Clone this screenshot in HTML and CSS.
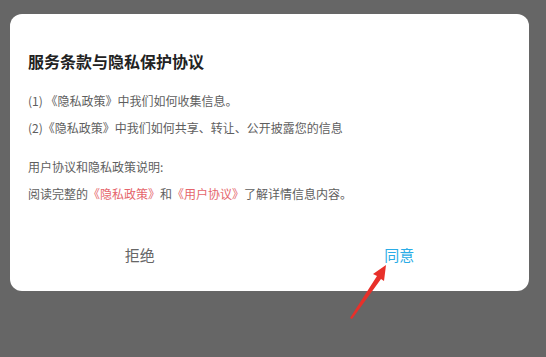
FILE: index.html
```html
<!DOCTYPE html>
<html lang="zh-CN">
<head>
<meta charset="utf-8">
<link rel="stylesheet" href="styles.css">
</head>
<body>
<div class="dialog">
  <div class="content">
    <h1 class="title">服务条款与隐私保护协议</h1>
    <p class="line">(1) 《隐私政策》中我们如何收集信息。</p>
    <p class="line">(2)《隐私政策》中我们如何共享、转让、公开披露您的信息</p>
    <p class="line gap">用户协议和隐私政策说明:</p>
    <p class="line">阅读完整的<span class="link">《隐私政策》</span>和<span class="link">《用户协议》</span>了解详情信息内容。</p>
  </div>
  <div class="actions">
    <div class="btn reject">拒绝</div>
    <div class="btn agree">同意</div>
  </div>
</div>
<svg class="arrow" width="60" height="70" viewBox="0 0 60 70">
  <path d="M40 1 L27 10 L31 12 L4 54 L6 55 L35 15 L38 17 Z" fill="#e8302a"/>
</svg>
</body>
</html>
```
FILE: styles.css
```css
html, body {
  margin: 0;
  padding: 0;
  background: #666666;
  width: 546px;
  height: 357px;
  overflow: hidden;
  font-family: "Noto Sans CJK SC", "Noto Sans", sans-serif;
}
body { position: relative; }
.dialog {
  margin: 14px 0 0 10px;
  width: 519px;
  height: 277px;
  background: #ffffff;
  border-radius: 12px;
  box-sizing: border-box;
  display: flex;
  flex-direction: column;
}
.content {
  padding: 35px 18px 0 18px;
}
.title {
  margin: 0 0 14px 0;
  font-size: 16px;
  line-height: 24px;
  font-weight: bold;
  color: #222222;
}
.line {
  margin: 0;
  font-size: 12px;
  line-height: 27px;
  color: #5e5e5e;
  white-space: nowrap;
}
.line.gap { margin-top: 12px; }
.link { color: #e5656b; }
.actions {
  margin-top: auto;
  margin-bottom: 15px;
  display: flex;
}
.btn {
  flex: 1;
  height: 44px;
  display: flex;
  align-items: center;
  justify-content: center;
  font-size: 15px;
}
.reject { color: #666666; }
.agree { color: #2aace6; }
.arrow {
  position: absolute;
  left: 346px;
  top: 264px;
}
```
